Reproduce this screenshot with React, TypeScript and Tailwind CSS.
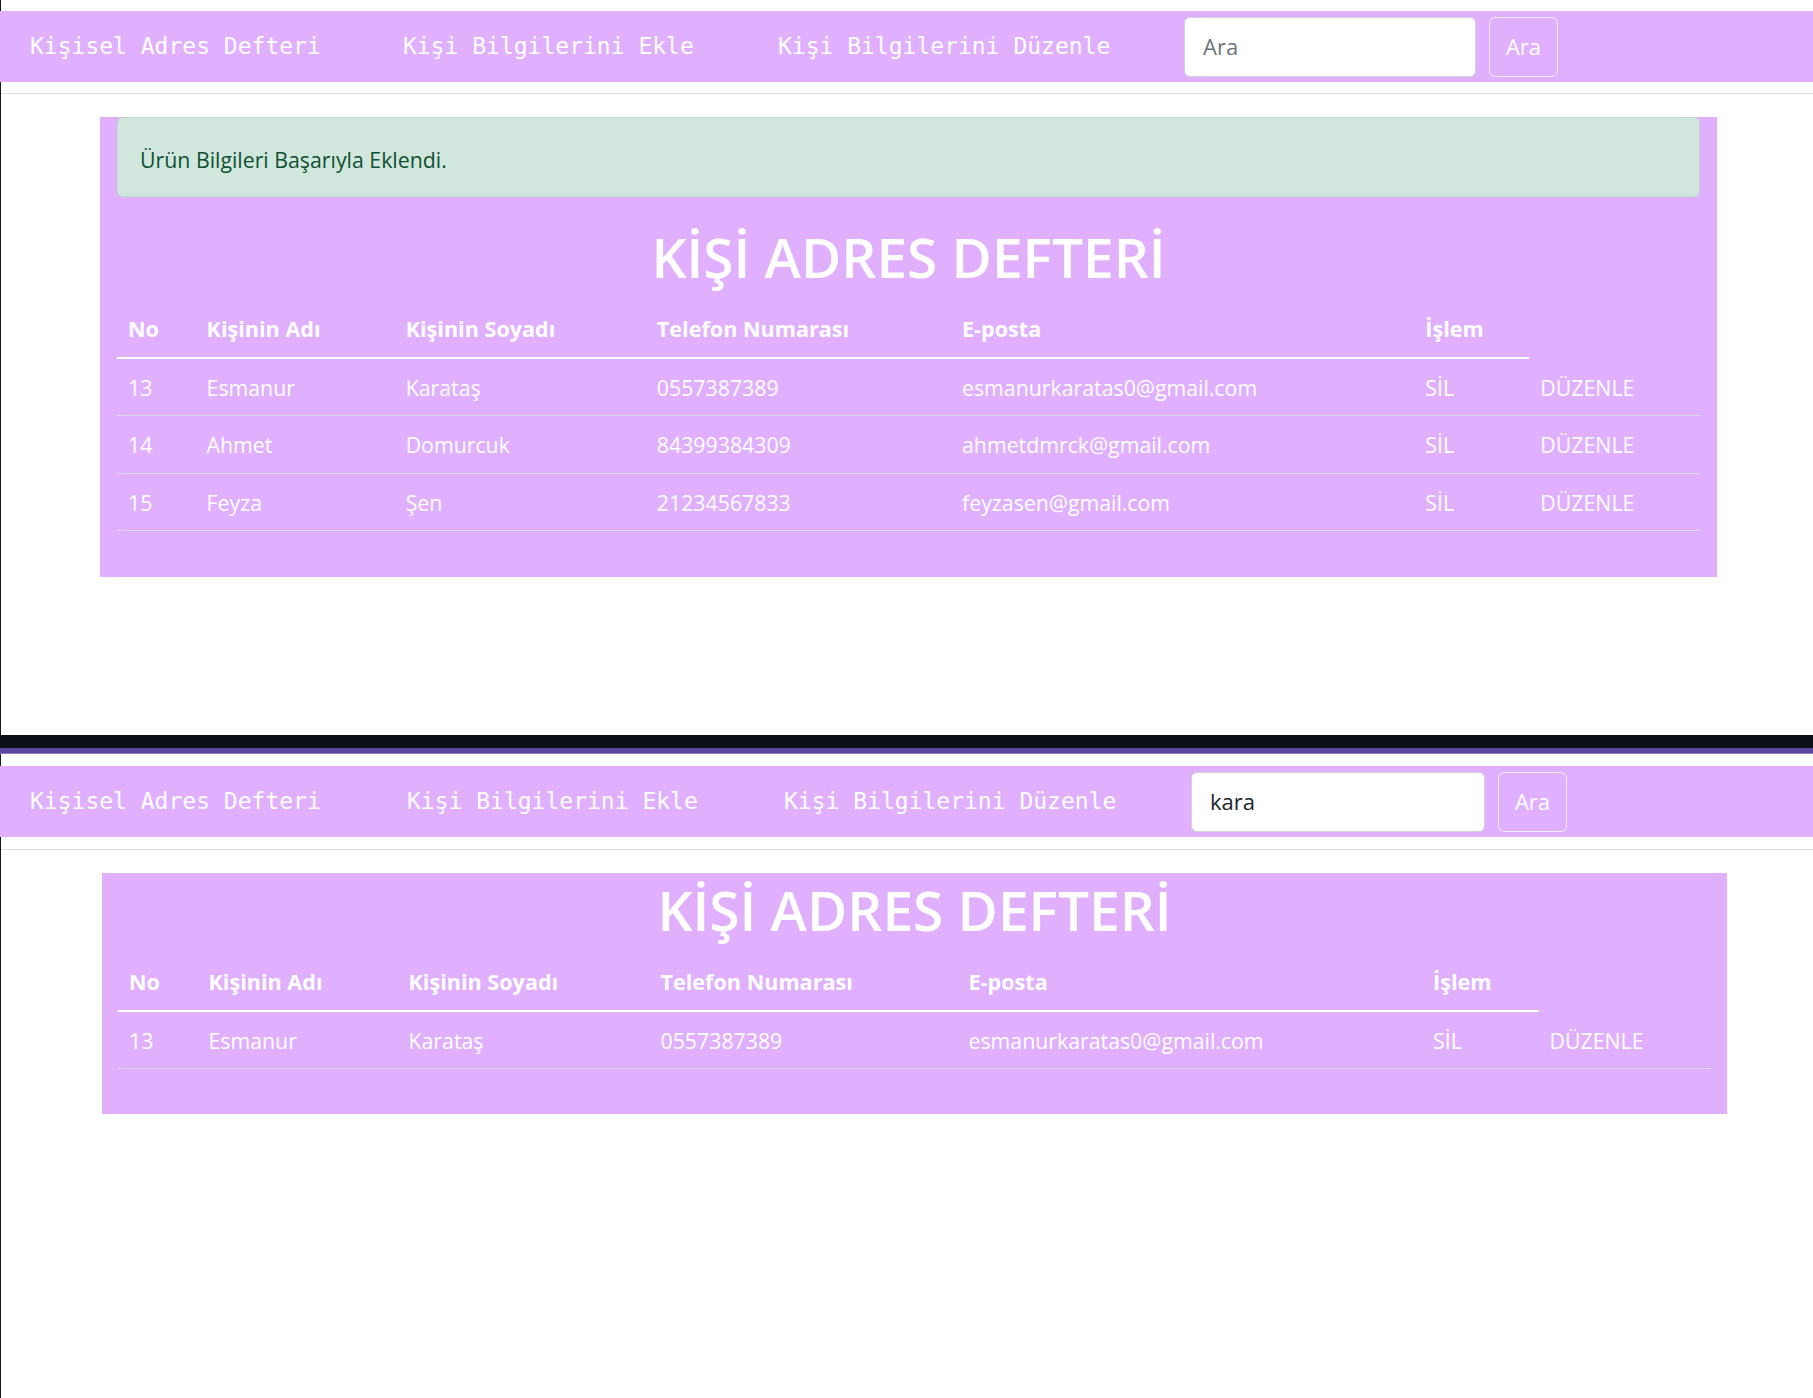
import React from "react";

type NavProps = {
  linkWidths: [number, number, number];
  inputWidth: number;
  value?: string;
};

const navWidthClass: Record<string, string> = {
  "373": "w-[373px]",
  "375": "w-[375px]",
  "406": "w-[406px]",
  "377": "w-[377px]",
  "407": "w-[407px]",
};

function Navbar({ linkWidths, inputWidth, value }: NavProps) {
  const links = ["Kişisel Adres Defteri", "Kişi Bilgilerini Ekle", "Kişi Bilgilerini Düzenle"];
  return (
    <nav className="flex h-[71px] items-center bg-[#e0b0ff] pl-[30px]">
      {links.map((l, i) => (
        <span
          key={l}
          className={`${navWidthClass[String(linkWidths[i])]} shrink-0 whitespace-nowrap text-[23px] text-white`}
          style={{ fontFamily: '"DejaVu Sans Mono", "Liberation Mono", monospace' }}
        >
          {l}
        </span>
      ))}
      <div
        className={`${inputWidth === 292 ? "w-[292px]" : "w-[294px]"} flex h-[60px] shrink-0 items-center rounded-[6px] border border-[#ced4da] bg-white pl-[18px] text-[22px]`}
        style={{ fontFamily: '"Open Sans", "Noto Sans", sans-serif' }}
      >
        {value ? (
          <span className="text-[#212529]">{value}</span>
        ) : (
          <span className="text-[#6c757d]">Ara</span>
        )}
      </div>
      <div
        className="ml-[13px] flex h-[60px] w-[69px] shrink-0 items-center justify-center rounded-[6px] border border-[#f4ecfb] text-[22px] text-white"
        style={{ fontFamily: '"Open Sans", "Noto Sans", sans-serif' }}
      >
        Ara
      </div>
    </nav>
  );
}

type Row = { no: string; ad: string; soyad: string; tel: string; mail: string };

const rows1: Row[] = [
  { no: "13", ad: "Esmanur", soyad: "Karataş", tel: "0557387389", mail: "esmanurkaratas0@gmail.com" },
  { no: "14", ad: "Ahmet", soyad: "Domurcuk", tel: "84399384309", mail: "ahmetdmrck@gmail.com" },
  { no: "15", ad: "Feyza", soyad: "Şen", tel: "21234567833", mail: "feyzasen@gmail.com" },
];

const rows2: Row[] = [rows1[0]];

function AddressTable({ rows, wide }: { rows: Row[]; wide: boolean }) {
  const heads = ["No", "Kişinin Adı", "Kişinin Soyadı", "Telefon Numarası", "E-posta", "İşlem"];
  return (
    <table className="w-full table-fixed border-separate border-spacing-0 text-[21.3px] text-white">
      {wide ? (
        <colgroup>
          <col className="w-[79.5px]" />
          <col className="w-[200px]" />
          <col className="w-[252px]" />
          <col className="w-[308px]" />
          <col className="w-[464.5px]" />
          <col className="w-[116.5px]" />
          <col className="w-[172.5px]" />
        </colgroup>
      ) : (
        <colgroup>
          <col className="w-[78.5px]" />
          <col className="w-[199px]" />
          <col className="w-[251px]" />
          <col className="w-[305px]" />
          <col className="w-[463px]" />
          <col className="w-[115px]" />
          <col className="w-[170.5px]" />
        </colgroup>
      )}
      <thead>
        <tr>
          {heads.map((h) => (
            <th
              key={h}
              className="border-b-2 border-white px-[11px] pb-[10px] pt-[11.5px] text-left text-[21.6px] font-bold leading-[34.5px] whitespace-nowrap"
            >
              {h}
            </th>
          ))}
          <th className="p-0" />
        </tr>
      </thead>
      <tbody>
        {rows.map((r) => (
          <tr key={r.no}>
            {[r.no, r.ad, r.soyad, r.tel, r.mail, "SİL", "DÜZENLE"].map((c, i) => (
              <td
                key={i}
                className="border-b border-[#dcd5e6] px-[11px] pb-[10px] pt-[12px] leading-[34.5px] whitespace-nowrap"
              >
                {c}
              </td>
            ))}
          </tr>
        ))}
      </tbody>
    </table>
  );
}

export default function App() {
  return (
    <div
      className="min-h-[1398px] w-[1813px] bg-white"
      style={{ fontFamily: '"Open Sans", "Noto Sans", sans-serif' }}
    >
      <div className="h-[11px] border-l border-[#1a1a1a]" />
      <Navbar linkWidths={[373, 375, 406]} inputWidth={292} />
      <div className="h-[653px] border-l border-[#1a1a1a] pt-[11px]">
        <div className="h-px bg-[#e2e2e2]" />
        <div className="ml-[99px] mt-[23px] w-[1617px] bg-[#e0b0ff] px-[17px] pb-[46px]">
          <div className="flex h-[80px] items-center rounded-[6px] border border-[#badbcc] bg-[#d1e7dd] pl-[22px] pt-[6px] text-[21.3px] text-[#0f5132]">
            Ürün Bilgileri Başarıyla Eklendi.
          </div>
          <h1 className="mb-[9.5px] mt-[25px] text-center text-[55px] font-semibold leading-[69px] text-white">
            KİŞİ ADRES DEFTERİ
          </h1>
          <AddressTable rows={rows1} wide={false} />
        </div>
      </div>
      <div className="h-[13px] bg-[#0d1117]" />
      <div className="h-[5px] bg-[#5e479f]" />
      <div className="h-px bg-[#8b7cc0]" />
      <div className="h-[12px] border-l border-[#1a1a1a]" />
      <Navbar linkWidths={[377, 377, 407]} inputWidth={294} value="kara" />
      <div className="h-[561px] border-l border-[#1a1a1a] pt-[12px]">
        <div className="h-px bg-[#e2e2e2]" />
        <div className="ml-[101px] mt-[23px] w-[1625px] bg-[#e0b0ff] px-[16px] pb-[45px]">
          <h1 className="mb-[9.5px] pt-[2px] text-center text-[55px] font-semibold leading-[69px] text-white">
            KİŞİ ADRES DEFTERİ
          </h1>
          <AddressTable rows={rows2} wide={true} />
        </div>
      </div>
    </div>
  );
}
